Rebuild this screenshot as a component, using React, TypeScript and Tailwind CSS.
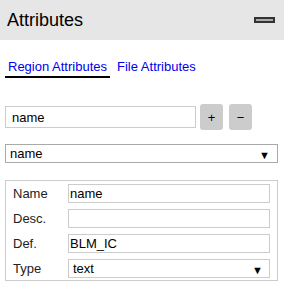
import { useState } from "react";

const font = { fontFamily: '"Liberation Sans", Arial, sans-serif' };

const Field = ({ label, value }: { label: string; value: string }) => (
  <div className="flex h-[19px] items-center">
    <span className="w-[62px] pl-[7px] text-[13px] leading-[15px] text-[#222]">{label}</span>
    <input
      defaultValue={value}
      className="h-[19px] w-[202px] border border-[#ccc] px-[1px] text-[13px] text-black outline-none"
    />
  </div>
);

const App = () => {
  const [tab, setTab] = useState("region");

  return (
    <div className="h-[283px] w-[284px] overflow-hidden bg-white text-black" style={font}>
      <div className="flex h-[40px] items-center justify-between bg-[#e6e6e6] pl-[7px] pr-[9px]">
        <span className="text-[18px] leading-[20px]">Attributes</span>
        <div className="h-[6px] w-[21px] border-2 border-[#333] bg-[#aaa]" />
      </div>

      <div className="mt-[19px] flex pl-[5px] text-[13px] leading-[15px] text-[#0000ee]">
        <span
          onClick={() => setTab("region")}
          className={`cursor-pointer border-b-2 px-[3px] pb-[2px] ${tab === "region" ? "border-black" : "border-transparent"}`}
        >
          Region Attributes
        </span>
        <span
          onClick={() => setTab("file")}
          className={`ml-[4px] cursor-pointer border-b-2 px-[3px] pb-[2px] ${tab === "file" ? "border-black" : "border-transparent"}`}
        >
          File Attributes
        </span>
      </div>

      <div className="mt-[26px] flex items-center pl-[5px]">
        <input
          defaultValue="name"
          className="h-[22px] w-[191px] border border-[#ccc] px-[6px] text-[13px] outline-none"
        />
        <button className="ml-[4px] h-[26px] w-[23px] rounded-[3px] bg-[#ccc] text-[13px] leading-none">+</button>
        <button className="ml-[6px] h-[26px] w-[23px] rounded-[3px] bg-[#ccc] text-[13px] leading-none">−</button>
      </div>

      <div className="relative ml-[5px] mt-[14px] flex h-[19px] w-[273px] items-center border border-[#aaa] pl-[4px] text-[13px]">
        name
        <span className="absolute right-[7px] top-[2px] text-[11px]">▼</span>
      </div>

      <div className="ml-[5px] mt-[17px] flex h-[101px] w-[273px] flex-col gap-[6px] border border-[#ccc] pt-[3px]">
        <Field label="Name" value="name" />
        <Field label="Desc." value="" />
        <Field label="Def." value="BLM_IC" />
        <div className="flex h-[19px] items-center">
          <span className="w-[62px] pl-[7px] text-[13px] leading-[15px] text-[#222]">Type</span>
          <div className="relative flex h-[19px] w-[202px] items-center border border-[#ccc] pl-[4px] text-[13px]">
            text
            <span className="absolute right-[6px] top-[2px] text-[11px]">▼</span>
          </div>
        </div>
      </div>
    </div>
  );
};

export default App;
